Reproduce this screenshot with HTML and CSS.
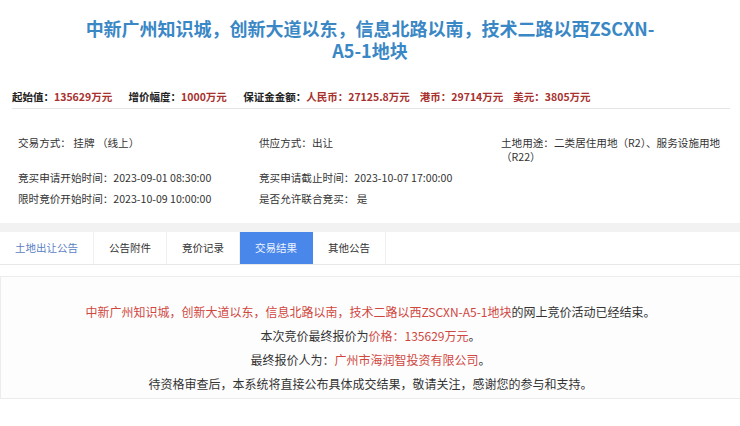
FILE: index.html
```html
<!DOCTYPE html>
<html lang="zh-CN">
<head>
    <meta charset="UTF-8">
    <title>交易结果</title>
    <link rel="stylesheet" href="styles.css">
</head>
<body>

    <h1 class="title">中新广州知识城，创新大道以东，信息北路以南，技术二路以西ZSCXN-A5-1地块</h1>

    <div class="price-row">
        <span class="price-item">起始值：<em>135629万元</em></span>
        <span class="price-item">增价幅度：<em>1000万元</em></span>
        <span class="price-item">保证金金额：<em>人民币：27125.8万元</em><em class="sub">港币：29714万元</em><em class="sub">美元：3805万元</em></span>
    </div>

    <div class="info">
        <div class="info-item">交易方式：&nbsp;挂牌 （线上）</div>
        <div class="info-item">供应方式：出让</div>
        <div class="info-item">土地用途：二类居住用地（R2）、服务设施用地（R22）</div>
        <div class="info-item">竞买申请开始时间：2023-09-01 08:30:00</div>
        <div class="info-item">竞买申请截止时间：2023-10-07 17:00:00</div>
        <div class="info-item"></div>
        <div class="info-item">限时竞价开始时间：2023-10-09 10:00:00</div>
        <div class="info-item">是否允许联合竞买：&nbsp;是</div>
        <div class="info-item"></div>
    </div>

    <div class="tabs-wrap">
        <ul class="tabs">
            <li class="tab first">土地出让公告</li>
            <li class="tab">公告附件</li>
            <li class="tab">竞价记录</li>
            <li class="tab active">交易结果</li>
            <li class="tab">其他公告</li>
        </ul>
    </div>

    <div class="result">
        <p><span class="red">中新广州知识城，创新大道以东，信息北路以南，技术二路以西ZSCXN-A5-1地块</span>的网上竞价活动已经结束。</p>
        <p>本次竞价最终报价为<span class="red">价格：135629万元</span>。</p>
        <p>最终报价人为：<span class="red">广州市海润智投资有限公司</span>。</p>
        <p>待资格审查后，本系统将直接公布具体成交结果，敬请关注，感谢您的参与和支持。</p>
    </div>

</body>
</html>
```

FILE: styles.css
```css
body {
    margin: 0;
    padding: 0;
    font-family: "Noto Sans CJK SC", "Noto Sans", sans-serif;
    color: #333;
    background: #fff;
}

.title {
    width: 580px;
    margin: 0 auto;
    padding-top: 17px;
    font-size: 18px;
    line-height: 22px;
    font-weight: bold;
    color: #3a87c6;
    text-align: center;
}

.price-row {
    margin: 29px 10px 0 12px;
    padding-bottom: 4px;
    border-bottom: 1px solid #e4e4e4;
    font-size: 10.5px;
    line-height: 14px;
    font-weight: bold;
    color: #222;
    white-space: nowrap;
}

.price-item {
    margin-right: 14px;
}

.price-row em {
    font-style: normal;
    color: #a8312e;
}

.price-row em.sub {
    margin-left: 10px;
}

.info {
    display: grid;
    grid-template-columns: 241px 242px 230px;
    row-gap: 7px;
    margin-top: 27px;
    padding-left: 18px;
    font-size: 10.6px;
    line-height: 14px;
    color: #333;
}

.tabs-wrap {
    margin-top: 17px;
    padding-top: 9px;
    background: #f2f2f2;
}

.tabs {
    display: flex;
    margin: 0;
    padding: 0;
    list-style: none;
    background: #fff;
    border-bottom: 1px solid #e8e8e8;
}

.tab {
    padding: 0 15px;
    height: 32px;
    line-height: 32px;
    font-size: 10.5px;
    color: #333;
    border-right: 1px solid #efefef;
}

.tab.first {
    color: #5b7fc4;
}

.tab.active {
    background: #4a87ea;
    color: #eef4ff;
    border-right-color: #4a87ea;
}

.result {
    margin-top: 11px;
    padding: 23px 0 2px;
    border: 1px solid #ececec;
    border-right: none;
    background: #fdfdfd;
    text-align: center;
    font-size: 12px;
    line-height: 24px;
    color: #333;
}

.result p {
    margin: 0;
}

.red {
    color: #d0473f;
}
```
